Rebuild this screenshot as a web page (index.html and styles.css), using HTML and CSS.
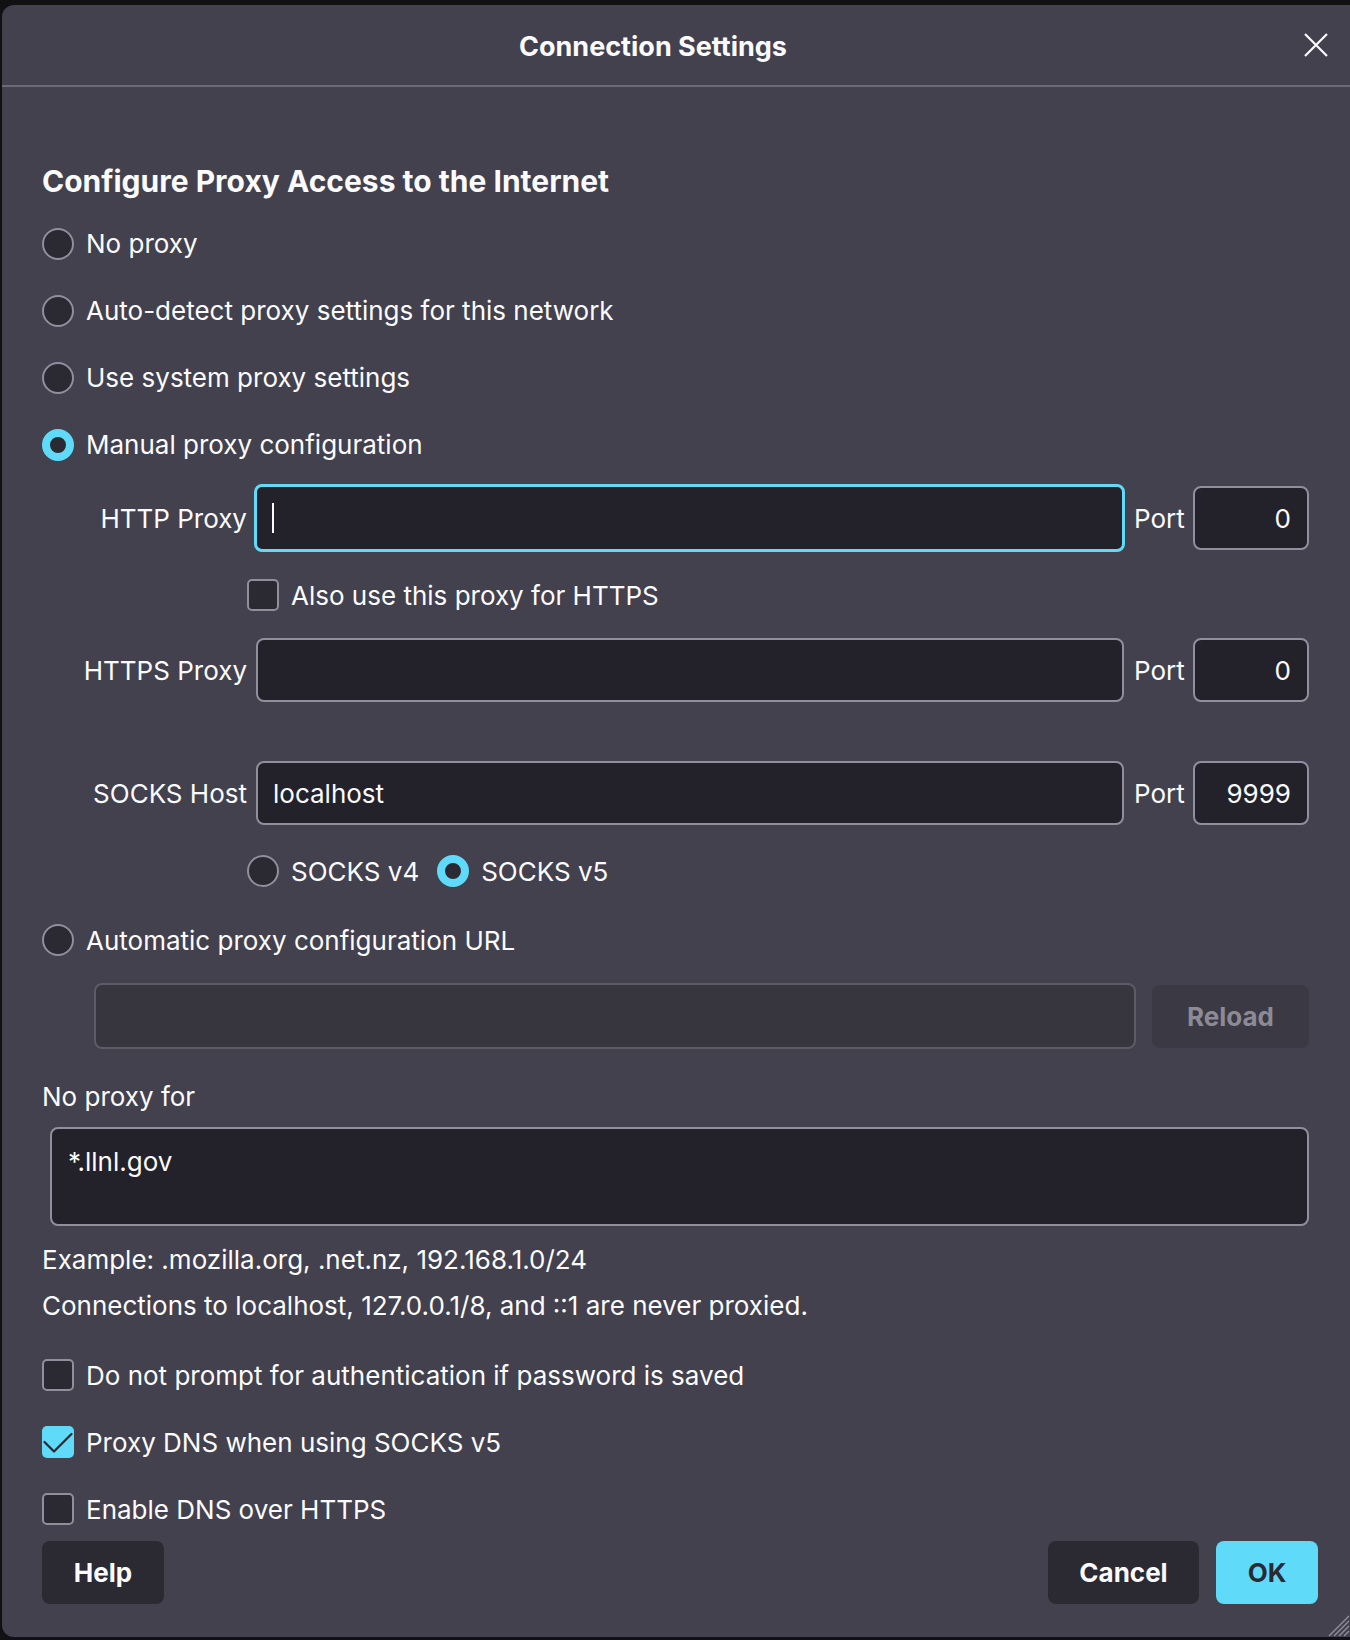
FILE: index.html
```html
<!DOCTYPE html>
<html lang="en">
<head>
<meta charset="utf-8">
<title>Connection Settings</title>
<link rel="stylesheet" href="styles.css">
</head>
<body>
<div class="dialog">
  <div class="header">
    <div class="title">Connection Settings</div>
    <div class="close">
      <svg width="24" height="24" viewBox="0 0 24 24"><path d="M1 1 L23 23 M23 1 L1 23" stroke="#fbfbfe" stroke-width="2.2" fill="none"/></svg>
    </div>
  </div>
  <div class="content">
    <div class="heading">Configure Proxy Access to the Internet</div>
    <div class="opt"><span class="radio"></span><span>No proxy</span></div>
    <div class="opt"><span class="radio"></span><span>Auto-detect proxy settings for this network</span></div>
    <div class="opt"><span class="radio"></span><span>Use system proxy settings</span></div>
    <div class="opt"><span class="radio on"></span><span>Manual proxy configuration</span></div>

    <div class="prow r-http">
      <div class="plabel">HTTP Proxy</div>
      <div class="field focus"><span class="caret"></span></div>
      <div class="portlabel">Port</div>
      <div class="port">0</div>
    </div>
    <div class="subopt r-also"><span class="check"></span><span>Also use this proxy for HTTPS</span></div>
    <div class="prow r-https">
      <div class="plabel">HTTPS Proxy</div>
      <div class="field"></div>
      <div class="portlabel">Port</div>
      <div class="port">0</div>
    </div>
    <div class="prow r-socks">
      <div class="plabel">SOCKS Host</div>
      <div class="field">localhost</div>
      <div class="portlabel">Port</div>
      <div class="port">9999</div>
    </div>
    <div class="subopt r-ver">
      <span class="radio"></span><span class="v4">SOCKS v4</span>
      <span class="radio on"></span><span>SOCKS v5</span>
    </div>
    <div class="opt r-auto"><span class="radio"></span><span>Automatic proxy configuration URL</span></div>
    <div class="urlrow">
      <div class="urlfield"></div>
      <div class="reload">Reload</div>
    </div>
    <div class="line r-noproxy">No proxy for</div>
    <div class="textarea">*.llnl.gov</div>
    <div class="line r-example">Example: .mozilla.org, .net.nz, 192.168.1.0/24</div>
    <div class="line r-conn">Connections to localhost, 127.0.0.1/8, and ::1 are never proxied.</div>
    <div class="copt r-c1"><span class="check"></span><span>Do not prompt for authentication if password is saved</span></div>
    <div class="copt"><span class="check on"><svg width="32" height="32" viewBox="0 0 32 32"><path d="M2.5 16 L12 25.5 L29.5 8" stroke="#2b2a33" stroke-width="2.3" fill="none" stroke-linecap="round" stroke-linejoin="round"/></svg></span><span>Proxy DNS when using SOCKS v5</span></div>
    <div class="copt"><span class="check"></span><span>Enable DNS over HTTPS</span></div>
    <div class="buttons">
      <div class="btn help">Help</div>
      <div class="spacer"></div>
      <div class="btn cancel">Cancel</div>
      <div class="btn ok">OK</div>
    </div>
  </div>
  <div class="grip">
    <svg width="24" height="24" viewBox="0 0 24 24"><path d="M23 3 L3 23 M23 8 L8 23 M23 13 L13 23 M23 18 L18 23" stroke="#8f8f9d" stroke-width="1.4" fill="none"/></svg>
  </div>
</div>
</body>
</html>
```
FILE: styles.css
```css
html, body {
  margin: 0;
  padding: 0;
  background: #111114;
}
body {
  font-family: Inter, "Noto Sans", sans-serif;
  color: #fbfbfe;
  width: 1350px;
  height: 1640px;
  overflow: hidden;
}
.dialog {
  position: relative;
  margin: 5px 0 0 2px;
  width: 1348px;
  height: 1632px;
  background: #42414d;
  border-radius: 12px 0 0 12px;
}
.header {
  position: relative;
  height: 80px;
  border-bottom: 2px solid #6b6a73;
  display: flex;
  align-items: center;
  justify-content: center;
}
.title {
  font-size: 27px;
  font-weight: 700;
  margin-left: -46px;
  padding-top: 2px;
}
.close {
  position: absolute;
  right: 22px;
  top: 28px;
  width: 24px;
  height: 24px;
}
.content {
  padding: 0 41px 0 40px;
  font-size: 26px;
  display: flex;
  flex-direction: column;
}
.heading {
  margin-top: 74px;
  height: 40px;
  line-height: 40px;
  font-size: 30px;
  font-weight: 700;
  margin-bottom: 9px;
}
.opt, .subopt, .copt {
  display: flex;
  align-items: center;
  height: 67px;
}
.radio {
  flex: none;
  width: 32px;
  height: 32px;
  box-sizing: border-box;
  border-radius: 50%;
  border: 2px solid #8f8f9d;
  background: #2b2a33;
  margin-right: 12px;
}
.radio.on {
  border: 8.5px solid #5fdbf9;
  background: #2b2a33;
}
.check {
  flex: none;
  width: 32px;
  height: 32px;
  box-sizing: border-box;
  border-radius: 5px;
  border: 2px solid #8f8f9d;
  background: #2b2a33;
  margin-right: 12px;
  display: flex;
  align-items: center;
  justify-content: center;
}
.check.on {
  border: none;
  background: #5fdbf9;
}
.prow {
  display: flex;
  align-items: center;
}
.r-http { height: 80px; }
.r-also { height: 74px; padding-left: 205px; }
.r-https { height: 76px; }
.r-socks { height: 66px; margin-top: 52px; }
.r-ver { height: 90px; padding-left: 205px; }
.r-ver .v4 { margin-right: 18px; }
.r-auto { height: 48px; }
.plabel {
  width: 205px;
  text-align: right;
  flex: none;
}
.field {
  flex: none;
  box-sizing: border-box;
  margin-left: 9px;
  width: 868px;
  height: 64px;
  border: 2px solid #8f8f9d;
  border-radius: 8px;
  background: #23222b;
  display: flex;
  align-items: center;
  padding-left: 15px;
}
.field.focus {
  border: 3px solid #5fdbf9;
  height: 68px;
  width: 871px;
  margin-left: 7px;
  margin-right: -1px;
}
.caret {
  width: 2px;
  height: 30px;
  background: #fbfbfe;
}
.portlabel {
  margin-left: 10px;
  width: 49px;
  flex: none;
}
.port {
  margin-left: 10px;
  flex: none;
  box-sizing: border-box;
  width: 116px;
  height: 64px;
  border: 2px solid #8f8f9d;
  border-radius: 8px;
  background: #23222b;
  display: flex;
  align-items: center;
  justify-content: flex-end;
  padding-right: 16px;
}
.urlrow {
  display: flex;
  align-items: center;
  margin-top: 19px;
  height: 66px;
  padding-left: 52px;
}
.urlfield {
  box-sizing: border-box;
  width: 1042px;
  height: 66px;
  border: 2px solid #5c5b66;
  border-radius: 8px;
  background: #37363f;
}
.reload {
  margin-left: 16px;
  box-sizing: border-box;
  width: 157px;
  height: 63px;
  border-radius: 8px;
  background: #3a3944;
  color: #8c8b95;
  font-weight: 700;
  display: flex;
  align-items: center;
  justify-content: center;
}
.line {
  height: 40px;
  display: flex;
  align-items: center;
}
.r-noproxy { margin-top: 27px; }
.textarea {
  margin-top: 11px;
  margin-left: 8px;
  box-sizing: border-box;
  height: 99px;
  border: 2px solid #8f8f9d;
  border-radius: 8px;
  background: #23222b;
  padding: 16px 0 0 16px;
  line-height: 34px;
}
.r-example { margin-top: 13px; }
.r-conn { margin-top: 6px; }
.copt { height: 60px; margin-top: 7px; }
.r-c1 { margin-top: 20px; }
.buttons {
  display: flex;
  margin-top: 2px;
  height: 63px;
  margin-right: -9px;
}
.spacer { flex: 1; }
.btn {
  box-sizing: border-box;
  height: 63px;
  border-radius: 8px;
  font-weight: 700;
  display: flex;
  align-items: center;
  justify-content: center;
  background: #2b2a33;
  color: #fbfbfe;
}
.help { width: 122px; }
.cancel { width: 151px; margin-right: 17px; }
.ok { width: 102px; background: #5fdbf9; color: #2b2a33; }
.grip {
  position: absolute;
  right: 0;
  bottom: 0;
  width: 24px;
  height: 24px;
}
```
